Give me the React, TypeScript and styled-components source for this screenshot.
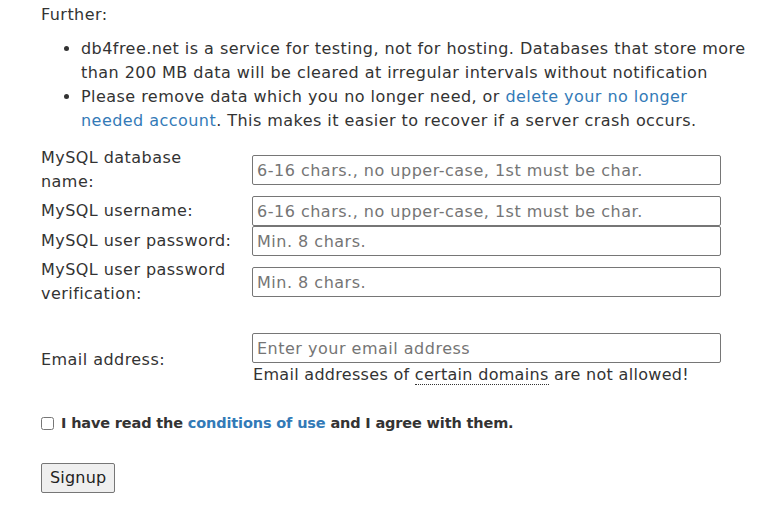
import * as React from "react";
import styled, { createGlobalStyle } from "styled-components";

const Global = createGlobalStyle`
    html, body {
        margin: 0;
        padding: 0;
        background: #fff;
    }
    body {
        font-family: "DejaVu Sans", Tahoma, Verdana, sans-serif;
        font-size: 16px;
        letter-spacing: 0.45px;
        line-height: 24px;
        color: #333;
    }
`

const Page = styled.div`
    padding: 3px 0 0 41px;
    width: 708px;
`

const Intro = styled.p`
    margin: 0;
`

const Notes = styled.ul`
    margin: 10px 0 11px;
    padding-left: 40px;
`

const Link = styled.a`
    color: #337ab7;
    text-decoration: none;
`

const Keep = styled.span`
    white-space: nowrap;
`

const Form = styled.div`
    display: grid;
    grid-template-columns: 211px 469px;
    align-items: center;
`

const Label = styled.div<{ tall?: boolean }>`
    height: ${(p) => (p.tall ? "52px" : "30px")};
    display: flex;
    align-items: center;
    padding-right: 16px;
`

const Field = styled.div`
    display: flex;
    flex-direction: column;
`

const Input = styled.input`
    box-sizing: border-box;
    width: 469px;
    height: 30px;
    margin: 0;
    padding: 0 4px;
    border: 1px solid #767676;
    border-radius: 2px;
    font: inherit;
    letter-spacing: 0.5px;
    color: #333;
    &::placeholder {
        color: #757575;
    }
`

const Spacer = styled.div`
    grid-column: 1 / 3;
    height: 25px;
`

const Hint = styled.div`
    padding-left: 1px;
    letter-spacing: 0.3px;
`

const Abbr = styled.abbr`
    text-decoration: none;
    border-bottom: 1px dotted #333;
`

const Agree = styled.label`
    display: flex;
    align-items: center;
    gap: 7px;
    margin-top: 24px;
    font-weight: bold;
    font-size: 14.5px;
    letter-spacing: -0.15px;
`

const Check = styled.input`
    margin: 0;
    width: 13px;
    height: 13px;
`

const Button = styled.button`
    margin-top: 28px;
    height: 30px;
    padding: 0 8px;
    border: 1px solid #767676;
    border-radius: 2px;
    background: #efefef;
    font: inherit;
    letter-spacing: 0.2px;
    color: #222;
`

export default function App() {
    return (
        <>
            <Global />
            <Page>
                <Intro>Further:</Intro>
                <Notes>
                    <li>db4free.net is a service for testing, not for hosting. Databases that store more than 200 MB data will be cleared at irregular intervals without notification</li>
                    <li>Please remove data which you no longer need, or <Link href="#">delete your no longer <Keep>needed account</Keep></Link>. This makes it easier to recover if a server crash occurs.</li>
                </Notes>
                <Form>
                    <Label tall>MySQL database name:</Label>
                    <Input placeholder="6-16 chars., no upper-case, 1st must be char." />
                    <Label>MySQL username:</Label>
                    <Input placeholder="6-16 chars., no upper-case, 1st must be char." />
                    <Label>MySQL user password:</Label>
                    <Input type="password" placeholder="Min. 8 chars." />
                    <Label tall>MySQL user password verification:</Label>
                    <Input type="password" placeholder="Min. 8 chars." />
                    <Spacer />
                    <Label>Email address:</Label>
                    <Field>
                        <Input placeholder="Enter your email address" />
                        <Hint>Email addresses of <Abbr title="">certain domains</Abbr> are not allowed!</Hint>
                    </Field>
                </Form>
                <Agree>
                    <Check type="checkbox" />
                    <span>I have read the <Link href="#">conditions of use</Link> and I agree with them.</span>
                </Agree>
                <Button>Signup</Button>
            </Page>
        </>
    );
}
